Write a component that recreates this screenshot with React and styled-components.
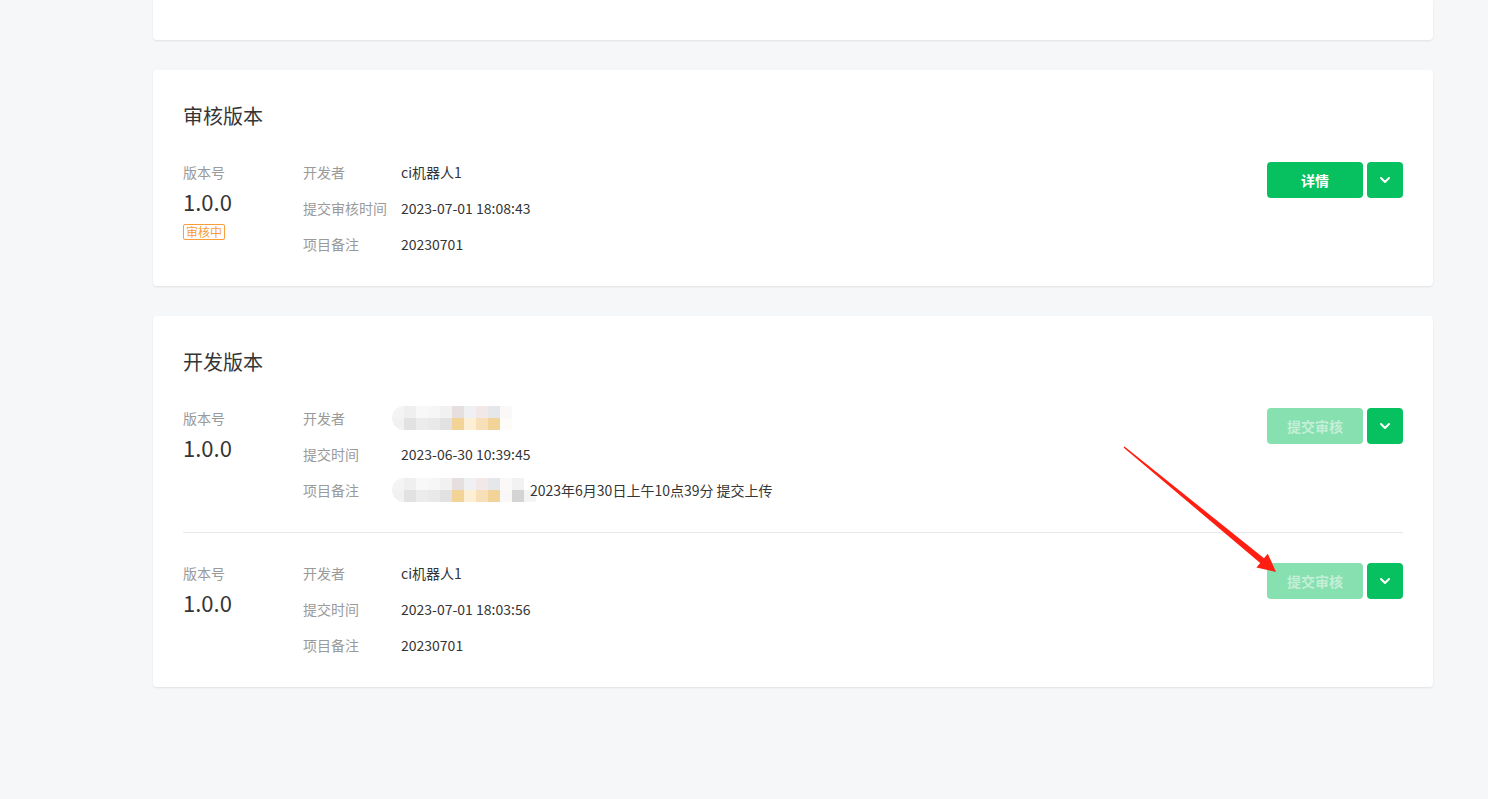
import React from "react";
import styled, { createGlobalStyle } from "styled-components";
import { ChevronDown } from "lucide-react";

const Global = createGlobalStyle`
  html, body {
    margin: 0;
    padding: 0;
    background: #f6f7f9;
    font-family: "Noto Sans CJK SC", "Liberation Sans", sans-serif;
    color: #353535;
  }
`;

const Page = styled.div`
  position: relative;
  min-height: 799px;
  padding: 0 55px 0 153px;
  box-sizing: border-box;
  display: flex;
  flex-direction: column;
  gap: 30px;
`;

const Card = styled.section`
  background: #fff;
  border-radius: ${(p) => (p.$cut ? "0 0 4px 4px" : "4px")};
  box-shadow: 0 1px 2px rgba(0, 0, 0, 0.09);
  padding: 30px 30px 0;
  height: ${(p) => (p.$cut ? "40px" : "auto")};
  box-sizing: border-box;
`;

const Title = styled.h2`
  margin: 0;
  font-size: 20px;
  line-height: 32px;
  font-weight: 400;
  color: #353535;
`;

const Item = styled.div`
  display: flex;
  align-items: flex-start;
  padding: 30px 0 32px;
  & + & {
    border-top: 1px solid #e7e7e7;
  }
`;

const VersionCol = styled.div`
  width: 120px;
  flex-shrink: 0;
  display: flex;
  flex-direction: column;
  align-items: flex-start;
`;

const SmallLabel = styled.div`
  font-size: 14px;
  line-height: 20px;
  color: #9a9a9a;
`;

const VersionNum = styled.div`
  font-size: 22px;
  line-height: 30px;
  margin-top: 4px;
  color: #353535;
`;

const Badge = styled.span`
  margin-top: 8px;
  border: 1px solid #fa9d3b;
  color: #fa9d3b;
  font-size: 12px;
  line-height: 14px;
  padding: 0 2px;
  border-radius: 2px;
`;

const InfoList = styled.div`
  flex: 1;
  display: flex;
  flex-direction: column;
  gap: 16px;
`;

const InfoRow = styled.div`
  display: flex;
  font-size: 14px;
  line-height: 20px;
`;

const InfoLabel = styled.div`
  width: 98px;
  flex-shrink: 0;
  color: #9a9a9a;
`;

const InfoValue = styled.div`
  color: #353535;
  display: flex;
  align-items: center;
`;

const Actions = styled.div`
  display: flex;
  gap: 4px;
`;

const MainButton = styled.button`
  width: 96px;
  height: 36px;
  border: none;
  border-radius: 4px;
  background: ${(p) => (p.disabled ? "#87e0b0" : "#07c160")};
  color: ${(p) => (p.disabled ? "rgba(255,255,255,0.5)" : "#fff")};
  font-family: inherit;
  font-size: 14px;
  font-weight: 700;
  cursor: ${(p) => (p.disabled ? "not-allowed" : "pointer")};
`;

const DropButton = styled.button`
  width: 36px;
  height: 36px;
  border: none;
  border-radius: 4px;
  background: #07c160;
  color: #fff;
  display: flex;
  align-items: center;
  justify-content: center;
  padding: 0;
`;

const Mosaic = styled.div`
  display: grid;
  grid-template-columns: repeat(${(p) => p.$cols}, 12px);
  grid-auto-rows: 12px;
  margin: -2px ${(p) => p.$gap}px -2px -9px;
  border-radius: 12px 2px 2px 12px;
  overflow: hidden;
`;

const Cell = styled.span`
  background: ${(p) => p.$c};
`;

const Arrow = styled.svg`
  position: absolute;
  left: 1110px;
  top: 440px;
  pointer-events: none;
`;

const topA = ["#f4f4f4", "#efefef", "#f8f8f8", "#f6f6f6", "#f1f1f1", "#e5dfe0", "#eef0f3", "#f2e8e8", "#e6e7ea", "#fdf8f8"];
const botA = ["#f1f1f1", "#e2e2e2", "#ececec", "#e9e9e9", "#e2e2e2", "#f3d498", "#fdeed6", "#f7e0b8", "#f3d498", "#fefcf9"];
const topB = [...topA, "#f2f2f2", "#ffffff"];
const botB = [...botA.slice(0, 9), "#f9f8f6", "#d4d4d4", "#f4f4f4"];

function Blur({ top, bottom, gap = 0 }) {
  return (
    <Mosaic $cols={top.length} $gap={gap}>
      {top.map((c, i) => (
        <Cell key={"t" + i} $c={c} />
      ))}
      {bottom.map((c, i) => (
        <Cell key={"b" + i} $c={c} />
      ))}
    </Mosaic>
  );
}

function Version({ badge }) {
  return (
    <VersionCol>
      <SmallLabel>版本号</SmallLabel>
      <VersionNum>1.0.0</VersionNum>
      {badge && <Badge>{badge}</Badge>}
    </VersionCol>
  );
}

function Buttons({ label, disabled }) {
  return (
    <Actions>
      <MainButton disabled={disabled}>{label}</MainButton>
      <DropButton>
        <ChevronDown size={16} strokeWidth={3} />
      </DropButton>
    </Actions>
  );
}

export default function App() {
  return (
    <Page>
      <Global />
      <Card $cut />

      <Card>
        <Title>审核版本</Title>
        <Item>
          <Version badge="审核中" />
          <InfoList>
            <InfoRow>
              <InfoLabel>开发者</InfoLabel>
              <InfoValue>ci机器人1</InfoValue>
            </InfoRow>
            <InfoRow>
              <InfoLabel>提交审核时间</InfoLabel>
              <InfoValue>2023-07-01 18:08:43</InfoValue>
            </InfoRow>
            <InfoRow>
              <InfoLabel>项目备注</InfoLabel>
              <InfoValue>20230701</InfoValue>
            </InfoRow>
          </InfoList>
          <Buttons label="详情" />
        </Item>
      </Card>

      <Card>
        <Title>开发版本</Title>
        <Item>
          <Version />
          <InfoList>
            <InfoRow>
              <InfoLabel>开发者</InfoLabel>
              <InfoValue>
                <Blur top={topA} bottom={botA} />
              </InfoValue>
            </InfoRow>
            <InfoRow>
              <InfoLabel>提交时间</InfoLabel>
              <InfoValue>2023-06-30 10:39:45</InfoValue>
            </InfoRow>
            <InfoRow>
              <InfoLabel>项目备注</InfoLabel>
              <InfoValue>
                <Blur top={topB} bottom={botB} gap={-6} />
                2023年6月30日上午10点39分 提交上传
              </InfoValue>
            </InfoRow>
          </InfoList>
          <Buttons label="提交审核" disabled />
        </Item>
        <Item>
          <Version />
          <InfoList>
            <InfoRow>
              <InfoLabel>开发者</InfoLabel>
              <InfoValue>ci机器人1</InfoValue>
            </InfoRow>
            <InfoRow>
              <InfoLabel>提交时间</InfoLabel>
              <InfoValue>2023-07-01 18:03:56</InfoValue>
            </InfoRow>
            <InfoRow>
              <InfoLabel>项目备注</InfoLabel>
              <InfoValue>20230701</InfoValue>
            </InfoRow>
          </InfoList>
          <Buttons label="提交审核" disabled />
        </Item>
      </Card>

      <Arrow width="180" height="150" viewBox="0 0 180 150">
        <polygon
          fill="#ff1e12"
          points="14.5,6.4 154,118.3 157.8,113.7 166,132 146.4,127.5 150.2,122.9 13.5,7.6"
        />
      </Arrow>
    </Page>
  );
}
